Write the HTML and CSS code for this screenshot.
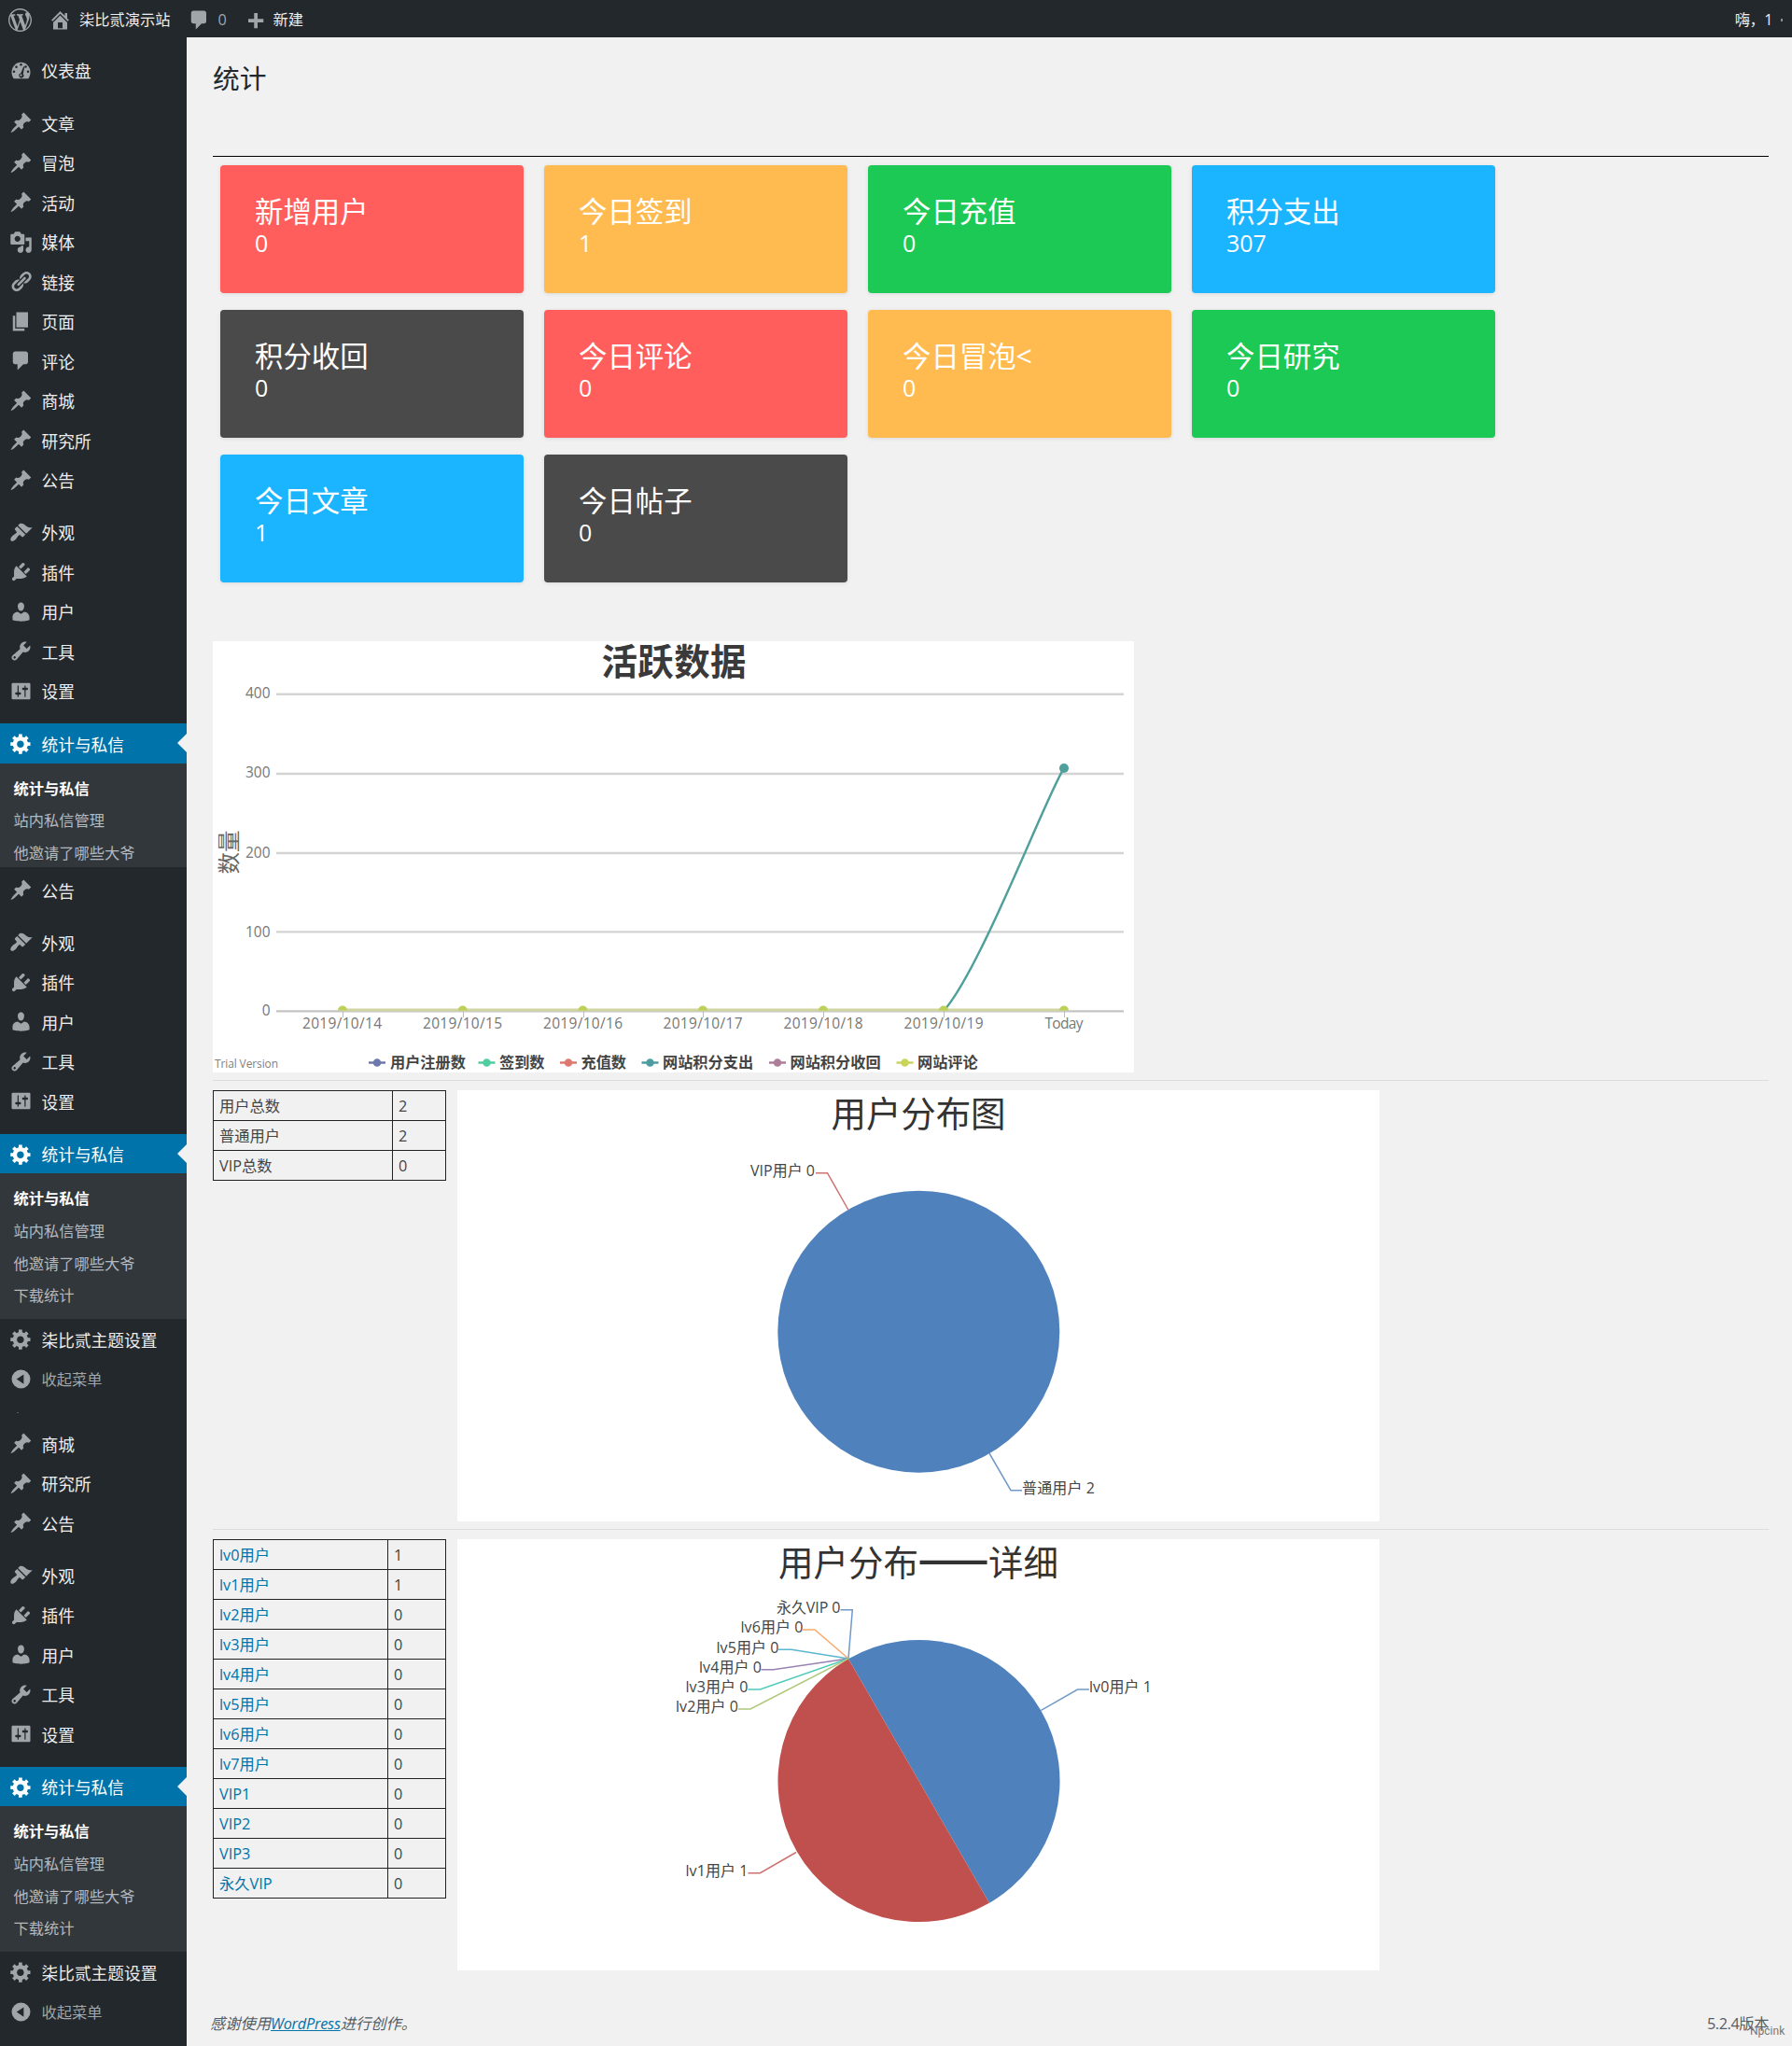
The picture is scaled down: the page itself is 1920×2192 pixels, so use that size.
FILE: index.html
```
<!DOCTYPE html>
<html lang="zh-CN">
<head>
    <meta charset="UTF-8">
    <meta name="viewport" content="width=device-width, initial-scale=1.0">
    <title>统计 ‹ 柒比贰演示站 — WordPress</title>
    <link rel="stylesheet" href="styles.css">
</head>
<body>

<!-- Icon set -->
<svg class="icon-set" width="0" height="0">
    <symbol id="i-wp" viewBox="0 0 20 20"><path d="M20 10c0-5.51-4.49-10-10-10C4.48 0 0 4.49 0 10c0 5.52 4.48 10 10 10 5.51 0 10-4.48 10-10zM7.78 15.37L4.37 6.22c.55-.02 1.17-.08 1.17-.08.5-.06.44-1.13-.06-1.11 0 0-1.45.11-2.37.11-.18 0-.37 0-.58-.01C4.12 2.69 6.87 1.11 10 1.11c2.33 0 4.45.87 6.05 2.34-.68-.11-1.65.39-1.65 1.58 0 .74.45 1.36.9 2.1.35.61.55 1.36.55 2.46 0 1.49-1.4 5-1.4 5l-3.03-8.37c.54-.02.82-.17.82-.17.5-.05.44-1.25-.06-1.22 0 0-1.44.12-2.38.12-.87 0-2.33-.12-2.33-.12-.5-.03-.56 1.2-.06 1.22l.92.08 1.26 3.41zM17.41 10c.24-.64.74-1.87.43-4.25.7 1.29 1.05 2.71 1.05 4.25 0 3.29-1.73 6.24-4.4 7.78.97-2.59 1.94-5.2 2.92-7.78zM6.1 18.09C3.12 16.65 1.11 13.53 1.11 10c0-1.3.23-2.48.72-3.59C3.25 10.3 4.67 14.2 6.1 18.09zm4.03-6.63l2.58 6.98c-.86.29-1.76.45-2.71.45-.79 0-1.57-.11-2.29-.33.81-2.38 1.62-4.74 2.42-7.1z"/></symbol>
    <symbol id="i-home" viewBox="0 0 20 20"><path d="M16 8.5l1.53 1.53-1.06 1.06L10 4.6l-6.47 6.47-1.06-1.06L10 2.47l4 4V4h2v4.5zm-6-2.46l6 5.99V18H4v-5.97zM12 17v-5H8v5h4z"/></symbol>
    <symbol id="i-plus" viewBox="0 0 20 20"><path d="M17 9v3h-5v5H9v-5H4V9h5V4h3v5h5z"/></symbol>
    <symbol id="i-dash" viewBox="0 0 20 20">
        <path d="M3.76 17h12.48c1.1-1.51 1.76-3.37 1.76-5.39C18 6.86 14.42 3 10 3S2 6.86 2 11.61c0 2.02.65 3.88 1.76 5.39z"/>
        <g fill="#23282d"><circle cx="10" cy="5" r="1"/><circle cx="6" cy="7" r="1"/><circle cx="4" cy="11" r="1"/><circle cx="14" cy="6.8" r="1"/><circle cx="16" cy="11" r="1"/><path d="M12.2 6.6l.8.3-1.2 6.1a2 2 0 1 1-2-.6z"/></g>
        <circle cx="10" cy="14" r=".9"/>
    </symbol>
    <symbol id="i-pin" viewBox="0 0 20 20"><path d="M10.44 3.02l1.82-1.82 6.36 6.35-1.83 1.82c-1.05-.68-2.48-.57-3.41.36l-.75.75c-.92.93-1.04 2.35-.35 3.41l-1.83 1.82-2.41-2.41-2.8 2.79c-.42.42-3.38 2.71-3.8 2.29s1.86-3.39 2.28-3.81l2.79-2.79L4.1 9.36l1.83-1.82c1.05.69 2.48.57 3.4-.36l.75-.75c.93-.92 1.05-2.35.36-3.41z"/></symbol>
    <symbol id="i-media" viewBox="0 0 20 20"><path d="M13 11V4c0-.55-.45-1-1-1h-1.67L9 1H5L3.67 3H2c-.55 0-1 .45-1 1v7c0 .55.45 1 1 1h10c.55 0 1-.45 1-1zM7 4.5c1.38 0 2.5 1.12 2.5 2.5S8.38 9.5 7 9.5 4.5 8.38 4.5 7 5.62 4.5 7 4.5zM14 6h5v10.5c0 1.38-1.12 2.5-2.5 2.5S14 17.88 14 16.5s1.12-2.5 2.5-2.5c.17 0 .34.02.5.05V9h-3V6zm-4 8.05V13h2v3.5c0 1.38-1.12 2.5-2.5 2.5S7 17.88 7 16.5 8.12 14 9.5 14c.17 0 .34.02.5.05z"/></symbol>
    <symbol id="i-link" viewBox="0 0 20 20"><path d="M17.74 2.76c1.68 1.69 1.68 4.41 0 6.1l-1.53 1.52c-1.12 1.12-2.7 1.47-4.14 1.09l2.62-2.61.76-.77.76-.76c.84-.84.84-2.2 0-3.04-.84-.85-2.2-.85-3.04 0l-.77.76-3.38 3.38c-.37-1.44-.02-3.02 1.1-4.14l1.52-1.53c1.69-1.68 4.42-1.68 6.1 0zM8.59 13.43l5.34-5.34c.42-.42.42-1.1 0-1.52-.44-.43-1.13-.39-1.53 0l-5.33 5.34c-.42.42-.42 1.1 0 1.52.44.43 1.13.39 1.52 0zm-.76 2.29l4.14-4.15c.38 1.44.03 3.02-1.09 4.14l-1.52 1.53c-1.69 1.68-4.41 1.68-6.1 0-1.68-1.68-1.68-4.42 0-6.1l1.53-1.52c1.12-1.12 2.7-1.47 4.14-1.1l-4.14 4.15c-.85.84-.85 2.2 0 3.05.84.84 2.2.84 3.04 0z"/></symbol>
    <symbol id="i-page" viewBox="0 0 20 20"><path d="M6 15V2h10v13H6zm-1 1h8v2H3V5h2v11z"/></symbol>
    <symbol id="i-comment" viewBox="0 0 20 20"><path d="M5 2h9c1.1 0 2 .9 2 2v7c0 1.1-.9 2-2 2h-2l-5 5v-5H5c-1.1 0-2-.9-2-2V4c0-1.1.9-2 2-2z"/></symbol>
    <symbol id="i-brush" viewBox="0 0 20 20"><path d="M14.48 11.06L7.41 3.99l1.5-1.5c.5-.56 2.3-.47 3.51.32 1.21.8 1.43 1.28 2.91 2.1 1.18.64 2.45 1.26 4.45.85zm-.71.71L6.7 4.7 4.93 6.47c-.39.39-.39 1.02 0 1.41l1.06 1.06c.39.39.39 1.03 0 1.42-.6.6-1.43 1.11-2.21 1.69-.35.26-.7.53-1.01.84C1.43 14.23.4 16.08 1.4 17.07c.99 1 2.84-.03 4.18-1.36.31-.31.58-.66.85-1.02.57-.78 1.08-1.61 1.69-2.21.39-.39 1.02-.39 1.41 0l1.06 1.06c.39.39 1.02.39 1.41 0z"/></symbol>
    <symbol id="i-plug" viewBox="0 0 20 20"><path d="M13.11 4.36L9.87 7.6 8 5.73l3.24-3.24c.35-.34 1.05-.2 1.56.32.52.51.66 1.21.31 1.55zm-8 1.77l.91-1.12 9.01 9.01-1.19.84c-.71.71-2.63 1.16-3.82 1.16H6.14L4.9 17.26c-.59.59-1.54.59-2.12 0-.59-.58-.59-1.53 0-2.12l1.24-1.24v-3.88c0-1.13.4-3.19 1.09-3.89zm7.26 3.97l3.24-3.24c.34-.35 1.04-.21 1.55.31.52.51.66 1.21.31 1.55l-3.24 3.25z"/></symbol>
    <symbol id="i-user" viewBox="0 0 20 20"><path d="M10 9.25c-2.27 0-2.73-3.44-2.73-3.44C7 4.02 7.82 2 9.97 2c2.16 0 2.98 2.02 2.71 3.81 0 0-.41 3.44-2.68 3.44zm0 2.57L12.72 10c2.39 0 4.52 2.33 4.52 4.53v2.49s-3.65 1.13-7.24 1.13c-3.65 0-7.24-1.13-7.24-1.13v-2.49c0-2.25 1.94-4.48 4.47-4.48z"/></symbol>
    <symbol id="i-tool" viewBox="0 0 20 20"><path d="M16.68 9.77c-1.34 1.34-3.3 1.67-4.95.99l-5.41 6.52c-.99.99-2.59.99-3.58 0s-.99-2.59 0-3.57l6.52-5.42c-.68-1.65-.35-3.61.99-4.95 1.28-1.28 3.12-1.62 4.72-1.06l-2.89 2.89 2.82 2.82 2.86-2.87c.53 1.58.18 3.39-1.08 4.65zM3.81 16.21c.4.39 1.04.39 1.43 0 .4-.4.4-1.04 0-1.43-.39-.4-1.03-.4-1.43 0-.39.39-.39 1.03 0 1.43z"/></symbol>
    <symbol id="i-set" viewBox="0 0 20 20"><path d="M18 16V4c0-.55-.45-1-1-1H3c-.55 0-1 .45-1 1v12c0 .55.45 1 1 1h14c.55 0 1-.45 1-1zM8 11h1c.55 0 1 .45 1 1s-.45 1-1 1H8v1.5c0 .28-.22.5-.5.5s-.5-.22-.5-.5V13H6c-.55 0-1-.45-1-1s.45-1 1-1h1V5.5c0-.28.22-.5.5-.5s.5.22.5.5V11zm5-2h-1c-.55 0-1-.45-1-1s.45-1 1-1h1V5.5c0-.28.22-.5.5-.5s.5.22.5.5V7h1c.55 0 1 .45 1 1s-.45 1-1 1h-1v5.5c0 .28-.22.5-.5.5s-.5-.22-.5-.5V9z"/></symbol>
    <symbol id="i-gear" viewBox="0 0 20 20"><path d="M18 12h-2.18c-.17.7-.44 1.35-.81 1.93l1.54 1.54-2.1 2.1-1.54-1.54c-.58.36-1.23.63-1.91.79V19H8v-2.18c-.68-.16-1.33-.43-1.91-.79l-1.54 1.54-2.12-2.12 1.54-1.54c-.36-.58-.63-1.23-.79-1.91H1V9.03h2.17c.16-.7.44-1.35.8-1.94L2.43 5.55l2.1-2.1 1.54 1.54c.58-.37 1.24-.64 1.93-.81V2h3v2.18c.68.16 1.33.43 1.91.79l1.54-1.54 2.12 2.12-1.54 1.54c.36.59.64 1.24.8 1.94H18V12zm-8.5 1.5c1.66 0 3-1.34 3-3s-1.34-3-3-3-3 1.34-3 3 1.34 3 3 3z"/></symbol>
    <symbol id="i-fold" viewBox="0 0 20 20"><path fill-rule="evenodd" d="M10 2a8 8 0 1 0 0 16 8 8 0 0 0 0-16zm2.3 3.9v8.2L6.2 10z"/></symbol>
</svg>

<!-- Admin bar -->
<div class="adminbar">
    <svg class="icon wp"><use href="#i-wp"/></svg>
    <svg class="icon home"><use href="#i-home"/></svg>
    <span class="site">柒比贰演示站</span>
    <svg class="icon bubble"><use href="#i-comment"/></svg>
    <span class="count">0</span>
    <svg class="icon plus"><use href="#i-plus"/></svg>
    <span>新建</span>
    <span class="account">嗨，1</span>
    <i class="avatar"></i>
</div>

<div class="wrap">
    <!-- Side menu -->
    <div class="menu">
        <ul>
            <li><svg class="icon"><use href="#i-dash"/></svg>仪表盘</li>
            <li class="sep"></li>
            <li><svg class="icon"><use href="#i-pin"/></svg>文章</li>
            <li><svg class="icon"><use href="#i-pin"/></svg>冒泡</li>
            <li><svg class="icon"><use href="#i-pin"/></svg>活动</li>
            <li><svg class="icon"><use href="#i-media"/></svg>媒体</li>
            <li><svg class="icon"><use href="#i-link"/></svg>链接</li>
            <li><svg class="icon"><use href="#i-page"/></svg>页面</li>
            <li><svg class="icon"><use href="#i-comment"/></svg>评论</li>
            <li><svg class="icon"><use href="#i-pin"/></svg>商城</li>
            <li><svg class="icon"><use href="#i-pin"/></svg>研究所</li>
            <li><svg class="icon"><use href="#i-pin"/></svg>公告</li>
            <li class="sep"></li>
            <li><svg class="icon"><use href="#i-brush"/></svg>外观</li>
            <li><svg class="icon"><use href="#i-plug"/></svg>插件</li>
            <li><svg class="icon"><use href="#i-user"/></svg>用户</li>
            <li><svg class="icon"><use href="#i-tool"/></svg>工具</li>
            <li><svg class="icon"><use href="#i-set"/></svg>设置</li>
            <li class="sep"></li>
            <li class="current"><svg class="icon"><use href="#i-gear"/></svg>统计与私信</li>
        </ul>
        <div class="submenu cut">
            <b>统计与私信</b>
            <span>站内私信管理</span>
            <span>他邀请了哪些大爷</span>
        </div>
        <ul class="second">
            <li><svg class="icon"><use href="#i-pin"/></svg>公告</li>
            <li class="sep"></li>
            <li><svg class="icon"><use href="#i-brush"/></svg>外观</li>
            <li><svg class="icon"><use href="#i-plug"/></svg>插件</li>
            <li><svg class="icon"><use href="#i-user"/></svg>用户</li>
            <li><svg class="icon"><use href="#i-tool"/></svg>工具</li>
            <li><svg class="icon"><use href="#i-set"/></svg>设置</li>
            <li class="sep"></li>
            <li class="current"><svg class="icon"><use href="#i-gear"/></svg>统计与私信</li>
        </ul>
        <div class="submenu">
            <b>统计与私信</b>
            <span>站内私信管理</span>
            <span>他邀请了哪些大爷</span>
            <span>下载统计</span>
        </div>
        <ul>
            <li><svg class="icon"><use href="#i-gear"/></svg>柒比贰主题设置</li>
            <li class="collapse"><svg class="icon"><use href="#i-fold"/></svg>收起菜单</li>
        </ul>
        <div class="speck"></div>
        <ul>
            <li><svg class="icon"><use href="#i-pin"/></svg>商城</li>
            <li><svg class="icon"><use href="#i-pin"/></svg>研究所</li>
            <li><svg class="icon"><use href="#i-pin"/></svg>公告</li>
            <li class="sep"></li>
            <li><svg class="icon"><use href="#i-brush"/></svg>外观</li>
            <li><svg class="icon"><use href="#i-plug"/></svg>插件</li>
            <li><svg class="icon"><use href="#i-user"/></svg>用户</li>
            <li><svg class="icon"><use href="#i-tool"/></svg>工具</li>
            <li><svg class="icon"><use href="#i-set"/></svg>设置</li>
            <li class="sep"></li>
            <li class="current"><svg class="icon"><use href="#i-gear"/></svg>统计与私信</li>
        </ul>
        <div class="submenu">
            <b>统计与私信</b>
            <span>站内私信管理</span>
            <span>他邀请了哪些大爷</span>
            <span>下载统计</span>
        </div>
        <ul>
            <li><svg class="icon"><use href="#i-gear"/></svg>柒比贰主题设置</li>
            <li class="collapse"><svg class="icon"><use href="#i-fold"/></svg>收起菜单</li>
        </ul>
    </div>

    <!-- Content -->
    <div class="content">
        <h1>统计</h1>

        <div class="cards">
            <div class="card red"><h2>新增用户</h2><p>0</p></div>
            <div class="card orange"><h2>今日签到</h2><p>1</p></div>
            <div class="card green"><h2>今日充值</h2><p>0</p></div>
            <div class="card blue"><h2>积分支出</h2><p>307</p></div>
            <div class="card dark"><h2>积分收回</h2><p>0</p></div>
            <div class="card red"><h2>今日评论</h2><p>0</p></div>
            <div class="card orange"><h2>今日冒泡&lt;</h2><p>0</p></div>
            <div class="card green"><h2>今日研究</h2><p>0</p></div>
            <div class="card blue"><h2>今日文章</h2><p>1</p></div>
            <div class="card dark"><h2>今日帖子</h2><p>0</p></div>
        </div>

        <!-- Activity line chart -->
        <svg class="chart" width="987" height="462" viewBox="228 687 987 462">
            <text class="title bold" x="722" y="723" textLength="155">活跃数据</text>
            <g stroke="#d4d4d4" stroke-width="2.4">
                <path d="M296 743.7H1204M296 829H1204M296 914H1204M296 998.4H1204"/>
                <path stroke="#c4c4c4" d="M296 1083.4H1204"/>
                <path stroke-width="1" stroke="#bbb" d="M367.5 1084v6M496.5 1084v6M625.5 1084v6M753.5 1084v6M882.5 1084v6M1011.5 1084v6M1140.5 1084v6"/>
            </g>
            <g class="axis right">
                <text x="289.5" y="748">400</text>
                <text x="289.5" y="833">300</text>
                <text x="289.5" y="918.5">200</text>
                <text x="289.5" y="1003.5">100</text>
                <text x="289.5" y="1088">0</text>
            </g>
            <g class="axis">
                <text x="366.5" y="1101.5" textLength="85">2019/10/14</text>
                <text x="495.5" y="1101.5" textLength="85">2019/10/15</text>
                <text x="624.5" y="1101.5" textLength="85">2019/10/16</text>
                <text x="753" y="1101.5" textLength="85">2019/10/17</text>
                <text x="882" y="1101.5" textLength="85">2019/10/18</text>
                <text x="1011" y="1101.5" textLength="85">2019/10/19</text>
                <text x="1140" y="1101.5" textLength="41">Today</text>
            </g>
            <text class="ylabel" transform="translate(253.5 913) rotate(-90)">数量</text>
            <path d="M1011 1083C1050 1040 1122 850 1140 823" fill="none" stroke="#4f9f9b" stroke-width="2.4"/>
            <circle cx="1140" cy="823" r="5" fill="#4f9f9b"/>
            <path d="M367 1082H1140" stroke="#cfd6a2" stroke-width="3"/>
            <path fill="#bdd057" d="M362 1082.5a5 5 0 0 1 10 0zM490.7 1082.5a5 5 0 0 1 10 0zM619.5 1082.5a5 5 0 0 1 10 0zM748 1082.5a5 5 0 0 1 10 0zM877 1082.5a5 5 0 0 1 10 0zM1006 1082.5a5 5 0 0 1 10 0zM1135 1082.5a5 5 0 0 1 10 0z"/>
            <g class="legend">
                <g fill="#6d78ad" stroke="#6d78ad"><path d="M395 1138.5h18"/><circle cx="404" cy="1138.5" r="3"/></g>
                <g fill="#51cda0" stroke="#51cda0"><path d="M512.5 1138.5h18"/><circle cx="521.5" cy="1138.5" r="3"/></g>
                <g fill="#df7970" stroke="#df7970"><path d="M600 1138.5h18"/><circle cx="609" cy="1138.5" r="3"/></g>
                <g fill="#4c9ca0" stroke="#4c9ca0"><path d="M687.5 1138.5h18"/><circle cx="696.5" cy="1138.5" r="3"/></g>
                <g fill="#ae7d99" stroke="#ae7d99"><path d="M824 1138.5h18"/><circle cx="833" cy="1138.5" r="3"/></g>
                <g fill="#c9d45c" stroke="#c9d45c"><path d="M960.5 1138.5h18"/><circle cx="969.5" cy="1138.5" r="3"/></g>
                <text x="418" y="1143.5">用户注册数</text>
                <text x="535" y="1143.5">签到数</text>
                <text x="622.5" y="1143.5">充值数</text>
                <text x="710" y="1143.5">网站积分支出</text>
                <text x="846.5" y="1143.5">网站积分收回</text>
                <text x="983" y="1143.5">网站评论</text>
            </g>
            <text class="trial" x="230" y="1144" textLength="68">Trial Version</text>
        </svg>

        <hr>
        <div class="row">
            <table class="totals">
                <tr><td>用户总数</td><td>2</td></tr>
                <tr><td>普通用户</td><td>2</td></tr>
                <tr><td>VIP总数</td><td>0</td></tr>
            </table>
            <!-- User pie -->
            <svg class="chart" width="988" height="462" viewBox="490 1168 988 462">
                <text class="title" x="984" y="1206.5" textLength="187">用户分布图</text>
                <circle cx="984.3" cy="1426.7" r="151" fill="#4f81bc"/>
                <g class="leader">
                    <path stroke="#c0504e" d="M874 1256.7H886.5L908.8 1296"/>
                    <path stroke="#4f81bc" d="M1060 1557L1083 1596.7H1095"/>
                </g>
                <g class="label">
                    <text x="804" y="1260" textLength="69">VIP用户 0</text>
                    <text x="1095" y="1600" textLength="78">普通用户 2</text>
                </g>
            </svg>
        </div>

        <hr>
        <div class="row">
            <table class="levels">
                <tr><td><a href="#">lv0用户</a></td><td>1</td></tr>
                <tr><td><a href="#">lv1用户</a></td><td>1</td></tr>
                <tr><td><a href="#">lv2用户</a></td><td>0</td></tr>
                <tr><td><a href="#">lv3用户</a></td><td>0</td></tr>
                <tr><td><a href="#">lv4用户</a></td><td>0</td></tr>
                <tr><td><a href="#">lv5用户</a></td><td>0</td></tr>
                <tr><td><a href="#">lv6用户</a></td><td>0</td></tr>
                <tr><td><a href="#">lv7用户</a></td><td>0</td></tr>
                <tr><td><a href="#">VIP1</a></td><td>0</td></tr>
                <tr><td><a href="#">VIP2</a></td><td>0</td></tr>
                <tr><td><a href="#">VIP3</a></td><td>0</td></tr>
                <tr><td><a href="#">永久VIP</a></td><td>0</td></tr>
            </table>
            <!-- Level pie -->
            <svg class="chart" width="988" height="462" viewBox="490 1649 988 462">
                <text class="title" x="984" y="1687.5">用户分布<tspan class="dash">——</tspan>详细</text>
                <path fill="#4f81bc" d="M909 1777.2A151 151 0 0 1 1060 2038.8z"/>
                <path fill="#c0504e" d="M1060 2038.8A151 151 0 0 1 909 1777.2z"/>
                <g class="leader">
                    <path stroke="#4f81bc" d="M900.5 1724.7H913.3L909 1777"/>
                    <path stroke="#f79647" d="M860 1746H873L909 1777"/>
                    <path stroke="#33a6c2" d="M834 1767.3H848L909 1777"/>
                    <path stroke="#8064a1" d="M815.5 1788.7H828.7L909 1777"/>
                    <path stroke="#23bfaa" d="M801.5 1810H814.4L909 1777"/>
                    <path stroke="#9bbb58" d="M791 1831H804L909 1777"/>
                    <path stroke="#c0504e" d="M801.5 2006.7H814.4L853 1984.5"/>
                    <path stroke="#4f81bc" d="M1115.5 1832.3L1154.5 1810H1167"/>
                </g>
                <g class="label">
                    <text x="832" y="1728" textLength="68.5">永久VIP 0</text>
                    <text x="793.5" y="1749" textLength="67">lv6用户 0</text>
                    <text x="767.5" y="1770.5" textLength="67">lv5用户 0</text>
                    <text x="749" y="1792" textLength="67">lv4用户 0</text>
                    <text x="734.5" y="1813" textLength="67">lv3用户 0</text>
                    <text x="724" y="1834" textLength="67">lv2用户 0</text>
                    <text x="734.5" y="2009.5" textLength="67">lv1用户 1</text>
                    <text x="1167" y="1813" textLength="67">lv0用户 1</text>
                </g>
            </svg>
        </div>

        <div class="footer">
            <p><i>感谢使用<a href="#">WordPress</a>进行创作。</i></p>
            <p class="version">5.2.4版本</p>
        </div>
    </div>
</div>
<div class="watermark">Npcink</div>

</body>
</html>
```

FILE: styles.css
```
body {
    margin: 0;
    background: #f1f1f1;
    color: #444;
    font-family: "Open Sans", "Noto Sans CJK SC", sans-serif;
    font-size: 16.25px;
}
h1, h2, p, ul {
    margin: 0;
    padding: 0;
    font-weight: 400;
}
a {
    color: #0073aa;
}
.icon-set {
    position: absolute;
}
.icon {
    width: 25px;
    height: 25px;
    fill: #a0a5aa;
    flex: none;
}

/* admin bar */
.adminbar {
    height: 40px;
    box-sizing: border-box;
    padding: 2px 10px 0 9px;
    display: flex;
    align-items: center;
    background: #23282d;
    color: #eee;
    line-height: 38px;
}
.adminbar .home {
    margin-left: 18px;
    margin-right: 8px;
}
.adminbar .bubble {
    margin-left: 18px;
    margin-right: 8px;
}
.adminbar .count {
    color: #a0a5aa;
    width: 27px;
}
.adminbar .plus {
    margin-right: 7px;
}
.adminbar .account {
    margin-left: auto;
    letter-spacing: -0.5px;
}
.avatar {
    width: 2px;
    height: 3px;
    margin-left: 9px;
    background: #8a8f94;
}

.wrap {
    display: flex;
    height: 2152px;
}

/* side menu */
.menu {
    width: 200px;
    flex: none;
    box-sizing: border-box;
    padding-top: 14px;
    background: #23282d;
    color: #eee;
}
.menu ul {
    list-style: none;
}
.menu ul.second {
    padding-top: 3.5px;
}
.menu li {
    display: flex;
    align-items: center;
    height: 42.5px;
    padding-left: 10px;
    font-size: 17.7px;
    position: relative;
}
.menu li .icon {
    margin-right: 9.5px;
}
.menu li.sep {
    height: 13.75px;
}
.menu li.current {
    background: #0073aa;
    color: #fff;
}
.menu li.current .icon {
    fill: #fff;
}
.menu li.current::after {
    content: "";
    position: absolute;
    right: 0;
    top: 11px;
    border: 10px solid transparent;
    border-left: 0;
    border-right-color: #f1f1f1;
}
.menu li.collapse {
    color: #a0a5aa;
    font-size: 16.25px;
}
.submenu {
    height: 156px;
    box-sizing: border-box;
    padding: 10px 0 0 14.5px;
    background: #32373c;
    color: #b4b9be;
}
.submenu.cut {
    height: 111px;
    overflow: hidden;
}
.submenu b,
.submenu span {
    display: block;
    height: 34.7px;
    line-height: 34.7px;
}
.submenu b {
    color: #fff;
}
.speck {
    height: 27px;
    background: linear-gradient(#555a5f, #555a5f) 18px 15px / 2px 1px no-repeat;
}

/* content */
.content {
    flex: 1;
    padding: 0 25px 0 28px;
}
h1 {
    height: 128px;
    box-sizing: border-box;
    padding-top: 25px;
    border-bottom: 1px solid #000;
    font-size: 28.75px;
    line-height: 38px;
    color: #23282d;
    margin-bottom: 9px;
}
.cards {
    display: grid;
    grid-template-columns: repeat(4, 325px);
    gap: 18px 22px;
    margin-left: 8px;
    margin-bottom: 63px;
}
.card {
    height: 137px;
    box-sizing: border-box;
    padding: 31px 37px;
    border-radius: 4px;
    color: #fff;
    box-shadow: 0 1px 4px rgba(0, 0, 0, 0.1);
}
.card h2 {
    font-size: 30.4px;
    line-height: 37px;
}
.card p {
    font-size: 25px;
    line-height: 30px;
}
.red { background: #ff5e5c; }
.orange { background: #ffba50; }
.green { background: #1bc954; }
.blue { background: #1bb5ff; }
.dark { background: #4a4a4a; }

hr {
    height: 1px;
    margin: 8px 0 10px;
    border: 0;
    background: #dcdcdc;
}
.row {
    display: flex;
    align-items: flex-start;
    gap: 12px;
}
table {
    width: 250px;
    border-collapse: collapse;
    table-layout: fixed;
}
td {
    height: 31px;
    box-sizing: border-box;
    padding: 2px 6px 0;
    border: 1px solid #222;
    line-height: 29px;
}
td a {
    text-decoration: none;
}
.totals td:first-child {
    width: 192px;
}
.levels td:first-child {
    width: 187px;
}

/* charts */
.chart {
    display: block;
    background: #fff;
    flex: none;
}
.title {
    font-size: 37.5px;
    fill: #333;
    text-anchor: middle;
}
.title.bold {
    font-size: 38.5px;
    font-weight: 700;
    fill: #3a3a3a;
}
.dash {
    font-family: "Noto Sans CJK SC", sans-serif;
    font-weight: 700;
    stroke: #333;
    stroke-width: 2.5;
}
.axis {
    font-size: 15.5px;
    fill: #777;
    text-anchor: middle;
}
.axis.right {
    text-anchor: end;
}
.ylabel {
    font-size: 23.5px;
    fill: #666;
    text-anchor: middle;
}
.legend {
    font-size: 16.2px;
    font-weight: 700;
    fill: #444;
    stroke-width: 2.5;
}
.legend text {
    stroke: none;
}
.trial {
    font-size: 12px;
    fill: #808080;
}
.leader {
    fill: none;
    stroke-width: 1.5;
    opacity: .8;
}
.label {
    font-size: 16px;
    fill: #444;
}

.footer {
    display: flex;
    justify-content: space-between;
    margin: 44px 0 0 -3px;
    line-height: 26px;
    color: #555d66;
}
.footer a {
    letter-spacing: -0.2px;
}
.version {
    letter-spacing: -0.4px;
}
.watermark {
    position: absolute;
    left: 1875px;
    top: 2168px;
    font: 12px/16px Roboto, sans-serif;
    color: #777;
}
```
